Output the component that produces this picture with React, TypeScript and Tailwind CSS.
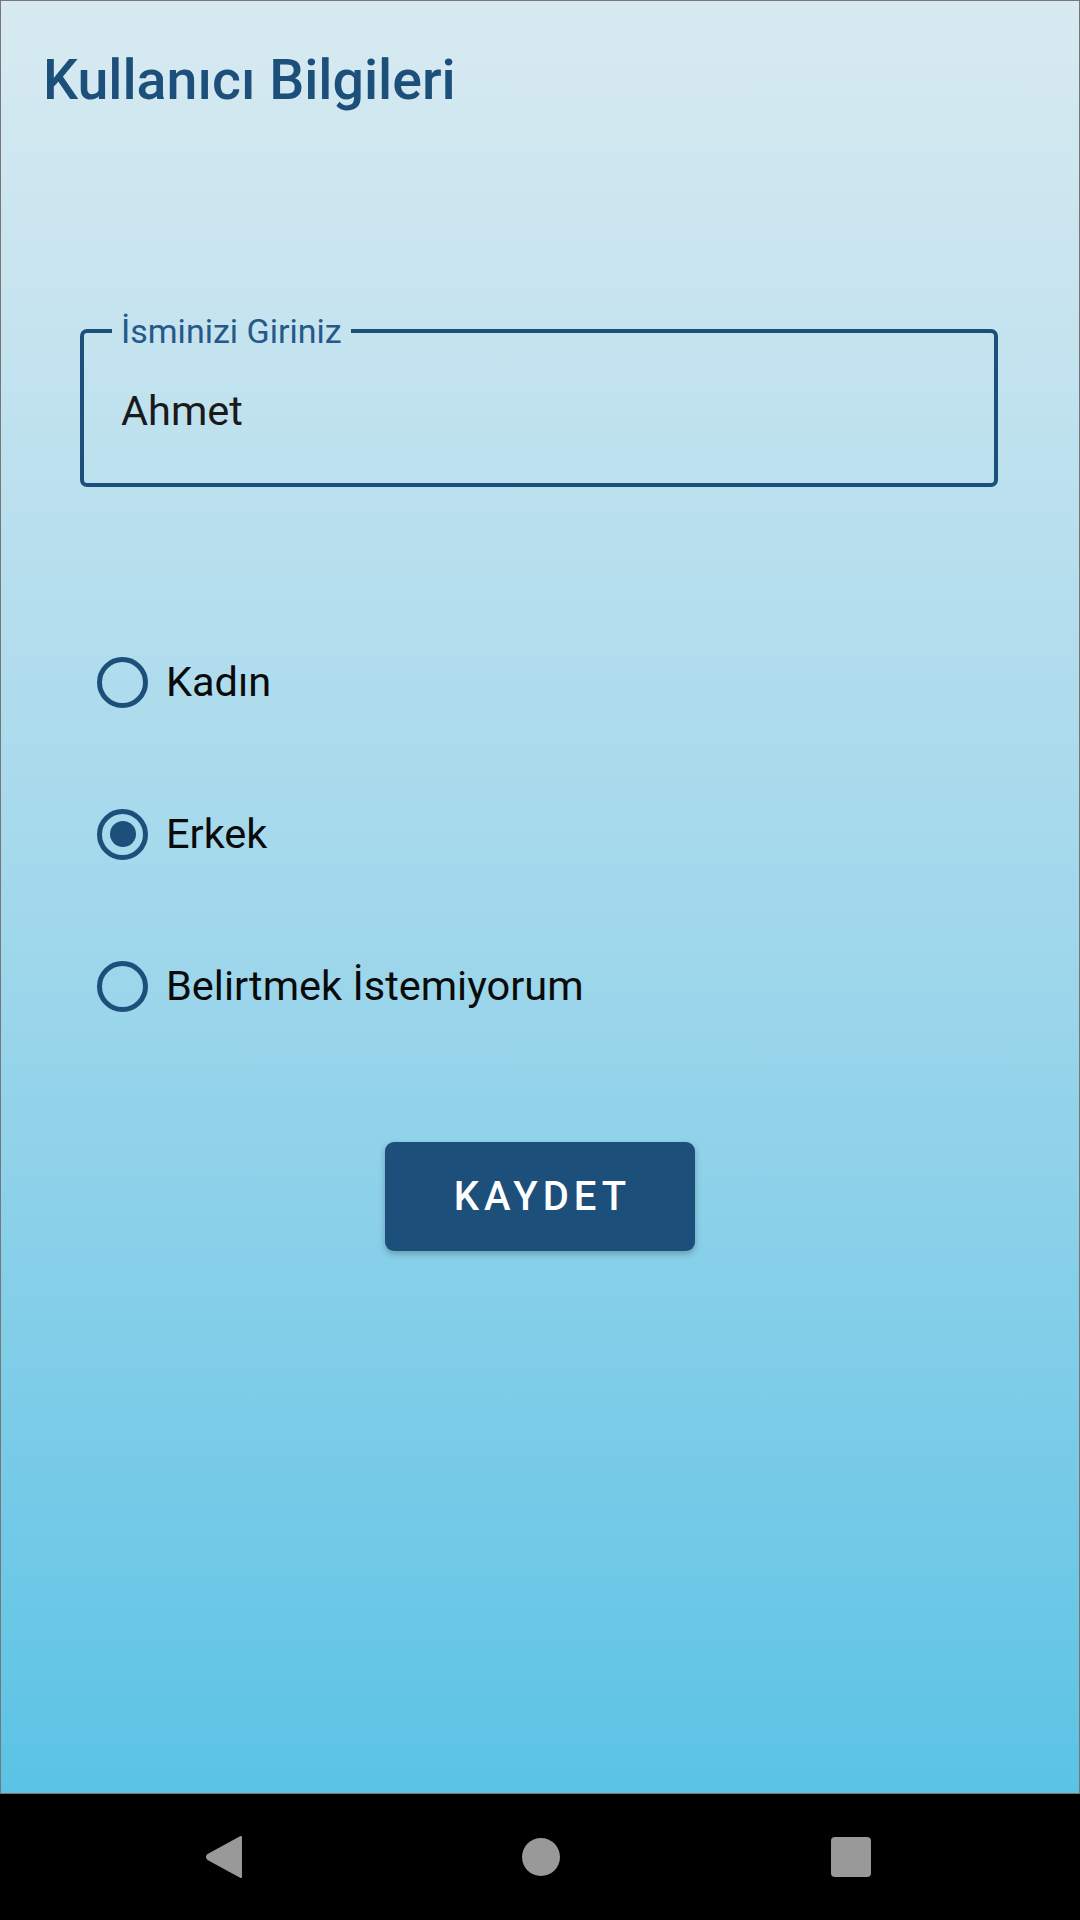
import React, { useState } from "react";

const options = ["Kadın", "Erkek", "Belirtmek İstemiyorum"];

const Radio = ({ label, checked, onSelect }: { label: string; checked: boolean; onSelect: () => void }) => (
    <button type="button" onClick={onSelect} className="flex h-[52px] items-center gap-[18px] text-left">
        <span className="flex h-[51px] w-[51px] items-center justify-center rounded-full border-[5px] border-[#1c4f7a]">
            {checked && <span className="h-[26px] w-[26px] rounded-full bg-[#1c4f7a]" />}
        </span>
        <span className="text-[41.5px] leading-none text-[#0a0a0a]">{label}</span>
    </button>
);

const App = () => {
    const [gender, setGender] = useState("Erkek");

    return (
        <div className="flex h-[1920px] w-[1080px] flex-col font-['Roboto','Liberation_Sans',sans-serif]">
            <div className="flex h-[1794px] flex-col border border-[#777777] bg-gradient-to-b from-[#d8eaf1] via-[#a2d8ec] to-[#5ac3e5]">
                <h1 className="ml-[42px] mt-[52px] text-[55.5px] font-medium leading-none text-[#1c4f7a]">
                    Kullanıcı Bilgileri
                </h1>

                <fieldset className="ml-[79px] mr-[81px] mt-[205px] rounded-[7px] border-[4px] border-[#1c4f7a] p-0">
                    <legend className="ml-[28px] px-[9px] text-[34px] leading-none text-[#24598a]">İsminizi Giriniz</legend>
                    <div className="pb-[52px] pl-[37px] pt-[42px] text-[41.5px] leading-none text-[#1a1a1a]">Ahmet</div>
                </fieldset>

                <div className="ml-[96px] mt-[169px] flex flex-col gap-[100px]">
                    {options.map((o) => (
                        <Radio key={o} label={o} checked={gender === o} onSelect={() => setGender(o)} />
                    ))}
                </div>

                <div className="mt-[130px] flex justify-center">
                    <button
                        type="button"
                        className="h-[109px] w-[310px] rounded-[9px] bg-[#1c4f7a] pl-[5px] text-[40px] font-medium tracking-[5px] text-white shadow-[0_3px_6px_rgba(0,0,0,0.25)]"
                    >
                        KAYDET
                    </button>
                </div>
            </div>

            {/* android nav bar */}
            <div className="flex flex-1 items-center bg-black pl-[205px]">
                <svg width="38" height="44" viewBox="0 0 38 44">
                    <path d="M36 2 L36 42 L3 24 Q1 22 3 20 Z" fill="#999999" stroke="#999999" strokeWidth="2" strokeLinejoin="round" />
                </svg>
                <span className="ml-[279px] h-[38px] w-[38px] rounded-full bg-[#999999]" />
                <span className="ml-[271px] h-[40px] w-[40px] rounded-[4px] bg-[#999999]" />
            </div>
        </div>
    );
};

export default App;
